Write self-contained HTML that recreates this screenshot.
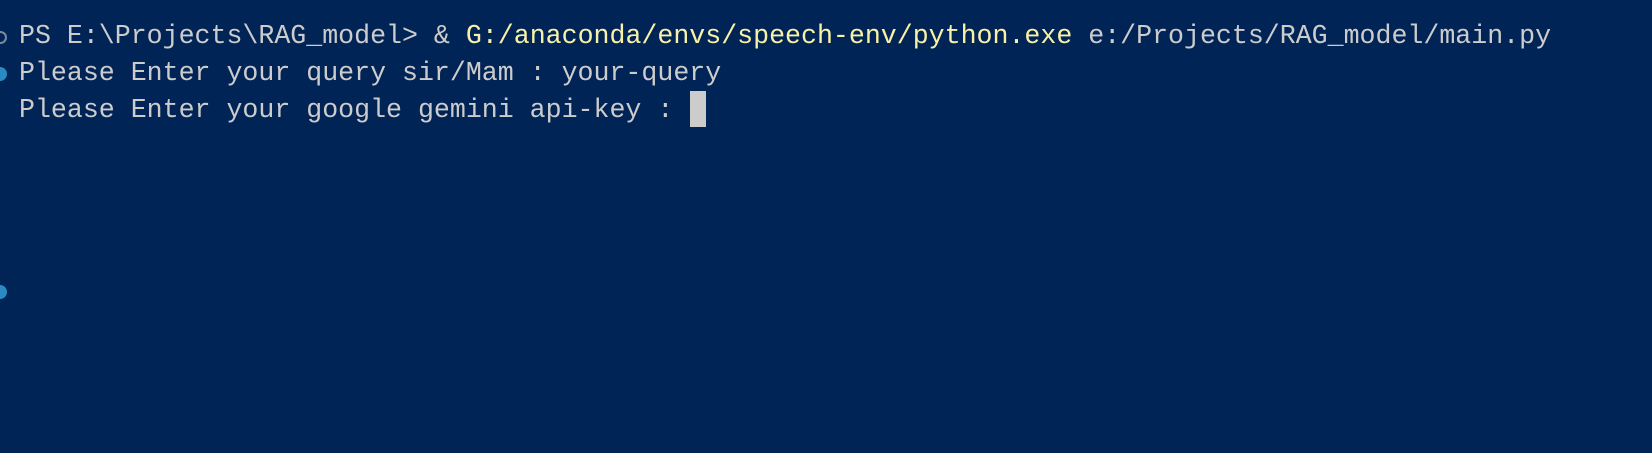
<!DOCTYPE html>
<html><head><meta charset="utf-8"><style>
html,body{margin:0;padding:0;width:1652px;height:453px;background:#012456;overflow:hidden}
.t{position:absolute;left:19px;font-family:"Liberation Mono",monospace;font-size:26.6px;color:#cccccc;white-space:pre;line-height:37px}
.y{color:#f9f1a5}
.d{position:absolute;border-radius:50%}
</style></head><body>
<div class="t" style="top:18px">PS E:\Projects\RAG_model&gt; &amp; <span class="y">G:/anaconda/envs/speech-env/python.exe</span> e:/Projects/RAG_model/main.py</div>
<div class="t" style="top:55px">Please Enter your query sir/Mam : your-query</div>
<div class="t" style="top:92px">Please Enter your google gemini api-key : </div>
<div style="position:absolute;left:690px;top:91px;width:16px;height:36px;background:#cccccc"></div>
<div class="d" style="left:-6px;top:31px;width:9px;height:9px;border:2px solid #7a8aa0"></div>
<div class="d" style="left:-7px;top:67px;width:14px;height:14px;background:#2a8ac4"></div>
<div class="d" style="left:-7px;top:285px;width:14px;height:14px;background:#2a8ac4"></div>
</body></html>
